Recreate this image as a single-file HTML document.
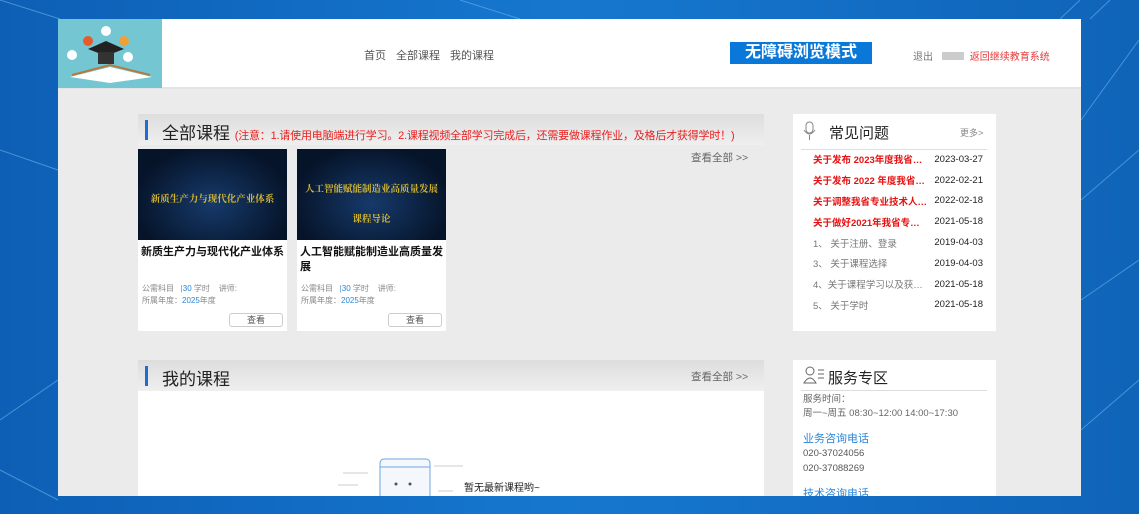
<!DOCTYPE html>
<html><head><meta charset="utf-8"><style>
*{margin:0;padding:0;box-sizing:border-box}
body{width:1139px;height:514px;overflow:hidden;font-family:"Liberation Sans","Noto Sans CJK SC",sans-serif;background:linear-gradient(90deg,#0d5fb5,#1677cf 50%,#0f64b8);position:relative}
.abs{position:absolute}
.frame{left:58px;top:19px;width:1023px;height:477px;background:#ebebeb;overflow:hidden}
.hdr{left:0;top:0;width:1023px;height:70px;background:#fff;border-bottom:2px solid #e4e4e4}
.logo{left:0;top:0;width:104px;height:69px;background:#6cc3cf}
.nav{left:306px;top:28px;font-size:11px;color:#555}
.nav span{margin-right:10px}
.wza{left:672px;top:23px;width:142px;height:22px;background:#0a78d8;color:#fff;font-size:16px;font-weight:bold;text-align:center;line-height:22px}
.sec{height:31px;background:linear-gradient(#ddd,#efefef);width:626px}
.sec .bar{position:absolute;left:7px;top:6px;width:3px;height:20px;background:#1a6fd0}
.sec .t{position:absolute;left:24px;top:5px;font-size:17px;color:#222;white-space:nowrap}
.card{width:149px;height:182px;background:#fff}
.img{width:149px;height:91px;background:radial-gradient(ellipse at 50% 60%,#163a6b,#061429 75%);color:#d8b830;font-size:9.5px;font-weight:bold;text-align:center;font-family:"Noto Serif CJK SC",serif;overflow:hidden;white-space:nowrap}
.ct{font-size:11px;font-weight:bold;color:#111;padding:5px 3px 0;line-height:15px;height:43px}
.meta{font-size:8px;color:#888;padding-left:4px;line-height:12px}
.blue{color:#2a86d8}
.btn{position:absolute;right:4px;bottom:4px;width:54px;height:14px;border:1px solid #ccc;border-radius:3px;font-size:9px;color:#555;text-align:center;line-height:12px}
.panel{background:#fff;width:203px}
.row{display:flex;justify-content:space-between;font-size:9.5px;height:20.8px;align-items:center;padding:0 13px 0 20px;white-space:nowrap}
.row .d{color:#222}
.r{color:#e81010;font-weight:bold}
.g{color:#777}
</style></head><body>
<svg class="abs" style="left:0;top:0" width="1139" height="514"><g stroke="#6fb2ee" stroke-width="1" fill="none" opacity=".6"><path d="M0 0 L60 19 M1139 40 L1081 120 M1081 200 L1139 150 M1081 300 L1139 260 M1081 430 L1139 380 M0 420 L58 380 M0 470 L58 500 M1090 19 L1110 0 M1060 19 L1080 0 M0 150 L58 170 M460 0 L520 19"/></g></svg>
<div class="abs frame">
 <div class="abs hdr">
  <div class="abs logo"><svg width="104" height="69"><rect width="104" height="69" fill="#74c6d2"/><path d="M12 58 L52 48 L94 58 L52 64 Z" fill="#fff"/><path d="M14 56 L52 46 L92 56" stroke="#b77a3a" stroke-width="2" fill="none"/><path d="M30 30 L48 22 L66 30 L48 37 Z" fill="#222"/><rect x="40" y="33" width="16" height="12" fill="#333"/><circle cx="30" cy="22" r="5" fill="#e85a2a"/><circle cx="48" cy="12" r="5" fill="#fff"/><circle cx="66" cy="22" r="5" fill="#f0a03a"/><circle cx="14" cy="36" r="5" fill="#fff"/><circle cx="70" cy="38" r="5" fill="#fff"/></svg></div>
  <div class="abs nav"><span>首页</span><span>全部课程</span><span>我的课程</span></div>
  <div class="abs wza">无障碍浏览模式</div>
  <div class="abs" style="left:855px;top:29px;font-size:10px;color:#777">退出 <span style="display:inline-block;width:22px;height:8px;background:#ccc;margin:0 6px"></span><span style="color:#e53a3a">返回继续教育系统</span></div>
 </div>
 <div class="abs sec" style="left:80px;top:95px"><div class="bar"></div><div class="t">全部课程 <span style="font-size:11px;color:#e82020;letter-spacing:-0.2px">(注意：1.请使用电脑端进行学习。2.课程视频全部学习完成后，还需要做课程作业，及格后才获得学时！)</span></div></div>
 <div class="abs" style="left:633px;top:131px;font-size:10.5px;color:#666">查看全部 &gt;&gt;</div>
 <div class="abs card" style="left:80px;top:130px"><div class="img" style="padding-top:42px">新质生产力与现代化产业体系</div><div class="ct">新质生产力与现代化产业体系</div><div class="meta">公需科目 &nbsp;&nbsp;<span style="color:#5a8fd0">|</span><span class="blue">30</span> 学时 &nbsp;&nbsp;&nbsp;讲师:<br>所属年度：<span class="blue">2025</span>年度</div><div class="btn">查看</div></div>
 <div class="abs card" style="left:239px;top:130px"><div class="img" style="padding-top:24px;line-height:30px">人工智能赋能制造业高质量发展<br>课程导论</div><div class="ct">人工智能赋能制造业高质量发展</div><div class="meta">公需科目 &nbsp;&nbsp;<span style="color:#5a8fd0">|</span><span class="blue">30</span> 学时 &nbsp;&nbsp;&nbsp;讲师:<br>所属年度：<span class="blue">2025</span>年度</div><div class="btn">查看</div></div>
 <div class="abs panel" style="left:735px;top:95px;height:217px">
  <svg class="abs" style="left:10px;top:7px" width="14" height="20"><rect x="3" y="1" width="7" height="11" rx="3.5" fill="none" stroke="#888"/><path d="M1 9 Q6.5 17 12 9 M6.5 14 V19" stroke="#888" fill="none"/></svg>
  <div class="abs" style="left:36px;top:8px;font-size:15px;color:#222">常见问题</div>
  <div class="abs" style="left:167px;top:12px;font-size:9px;color:#888">更多&gt;</div>
  <div class="abs" style="left:8px;top:35px;width:186px;border-top:1px solid #ddd"></div>
  <div class="abs" style="left:0;top:35px;width:203px">
   <div class="row"><span class="r">关于发布 2023年度我省…</span><span class="d">2023-03-27</span></div>
   <div class="row"><span class="r">关于发布 2022 年度我省…</span><span class="d">2022-02-21</span></div>
   <div class="row"><span class="r">关于调整我省专业技术人…</span><span class="d">2022-02-18</span></div>
   <div class="row"><span class="r">关于做好2021年我省专…</span><span class="d">2021-05-18</span></div>
   <div class="row"><span class="g">1、 关于注册、登录</span><span class="d">2019-04-03</span></div>
   <div class="row"><span class="g">3、 关于课程选择</span><span class="d">2019-04-03</span></div>
   <div class="row"><span class="g">4、关于课程学习以及获…</span><span class="d">2021-05-18</span></div>
   <div class="row"><span class="g">5、 关于学时</span><span class="d">2021-05-18</span></div>
  </div>
 </div>
 <div class="abs sec" style="left:80px;top:341px"><div class="bar"></div><div class="t">我的课程</div></div>
 <div class="abs" style="left:633px;top:350px;font-size:10.5px;color:#666">查看全部 &gt;&gt;</div>
 <div class="abs" style="left:80px;top:372px;width:626px;height:110px;background:#fff">
  <svg class="abs" style="left:200px;top:60px" width="130" height="50"><rect x="42" y="8" width="50" height="42" rx="4" fill="#f4f8fd" stroke="#6fa6e0"/><path d="M42 16 H92" stroke="#6fa6e0"/><path d="M5 22 H30 M0 34 H20 M96 15 H125 M100 40 H115" stroke="#ccc"/><circle cx="58" cy="33" r="1.5" fill="#456"/><circle cx="72" cy="33" r="1.5" fill="#456"/></svg>
  <div class="abs" style="left:326px;top:88px;font-size:10px;color:#222">暂无最新课程哟~</div>
 </div>
 <div class="abs panel" style="left:735px;top:341px;height:150px">
  <svg class="abs" style="left:10px;top:6px" width="22" height="18"><circle cx="7" cy="5" r="4" fill="none" stroke="#666"/><path d="M1 17 Q7 7 13 17 Z M15 4 H21 M15 8 H21 M15 12 H21" fill="none" stroke="#666"/></svg>
  <div class="abs" style="left:35px;top:7px;font-size:15px;color:#222">服务专区</div>
  <div class="abs" style="left:8px;top:30px;width:186px;border-top:1px solid #ddd"></div>
  <div class="abs" style="left:10px;top:33px;font-size:9.5px;color:#666;line-height:14px">服务时间：<br>周一~周五 08:30~12:00 14:00~17:30</div>
  <div class="abs" style="left:10px;top:70px;font-size:11px;color:#2a86d8">业务咨询电话</div>
  <div class="abs" style="left:10px;top:86px;font-size:9.5px;color:#555;line-height:15px">020-37024056<br>020-37088269</div>
  <div class="abs" style="left:10px;top:125px;font-size:11px;color:#2a86d8">技术咨询电话</div>
 </div>
</div>
</body></html>
